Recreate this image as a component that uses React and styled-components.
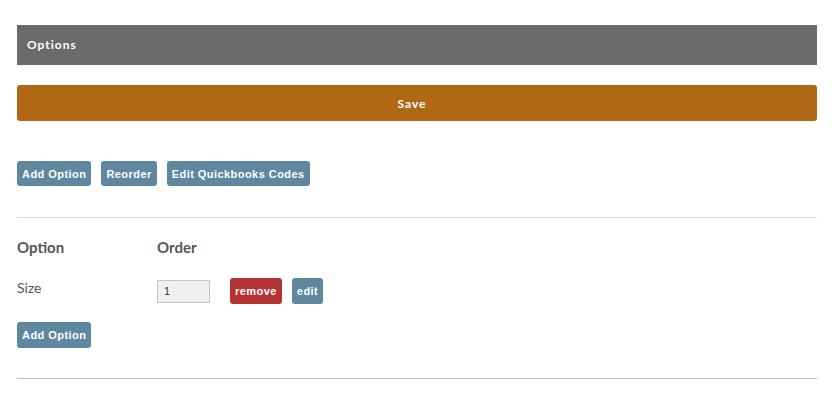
import React from 'react';
import styled, { createGlobalStyle } from 'styled-components';

const GlobalStyle = createGlobalStyle`
  body {
    margin: 0;
    background: #ffffff;
    font-family: Lato, "Open Sans", sans-serif;
  }
`;

const Root = styled.div`
  width: 800px;
  padding: 25px 17px 0;
`;

const PanelHeader = styled.div`
  height: 40px;
  background: #6b6b6b;
  color: #ffffff;
  display: flex;
  align-items: center;
  padding: 0 0 2px 10px;
  box-sizing: border-box;
  font-size: 12px;
  font-weight: 700;
  letter-spacing: 1px;
`;

const SaveButton = styled.button`
  display: block;
  width: 100%;
  height: 36px;
  margin-top: 20px;
  padding: 0 10px 0 0;
  border: 0;
  border-radius: 3px;
  background: #b06815;
  color: #ffffff;
  font-family: Lato, sans-serif;
  font-size: 12px;
  font-weight: 700;
  letter-spacing: 1px;
`;

const Toolbar = styled.div`
  display: flex;
  gap: 10px;
  margin-top: 40px;
`;

const Button = styled.button`
  height: ${p => p.$tall ? 26 : 25}px;
  padding: 0 5px;
  border: 0;
  border-radius: 3px;
  background: ${p => p.$danger ? '#b53232' : '#5f87a0'};
  color: #ffffff;
  font-family: "Liberation Sans", Arial, sans-serif;
  font-size: 11px;
  font-weight: 700;
  letter-spacing: 0.45px;
`;

const Divider = styled.hr`
  margin: ${p => p.$top}px 0 0;
  border: 0;
  border-top: 1px solid ${p => p.$dark ? '#bdbdbd' : '#dddddd'};
`;

const Grid = styled.div`
  display: grid;
  grid-template-columns: 140px auto;
  align-items: start;
`;

const HeadCell = styled.div`
  font-size: 15px;
  font-weight: 700;
  color: #555555;
  padding-top: 20px;
  line-height: 18px;
`;

const Label = styled.div`
  font-size: 14px;
  color: #555555;
  line-height: 18px;
  padding-top: 23px;
`;

const Cell = styled.div`
  display: flex;
  align-items: center;
  gap: 20px;
  padding-top: 22px;
`;

const Actions = styled.div`
  display: flex;
  gap: 10px;
`;

const OrderInput = styled.input`
  box-sizing: border-box;
  width: 53px;
  height: 23px;
  border: 1px solid #c4c4c4;
  background: #f0f0f0;
  padding: 0 6px;
  font-family: "Liberation Sans", Arial, sans-serif;
  font-size: 11px;
  color: #333333;
`;

const Footer = styled.div`
  margin-top: 18px;
`;

export default function App() {
  return (
    <>
      <GlobalStyle />
      <Root>
        <PanelHeader>Options</PanelHeader>
        <SaveButton>Save</SaveButton>
        <Toolbar>
          <Button>Add Option</Button>
          <Button>Reorder</Button>
          <Button>Edit Quickbooks Codes</Button>
        </Toolbar>
        <Divider $top={31} />
        <Grid>
          <HeadCell>Option</HeadCell>
          <HeadCell>Order</HeadCell>
          <Label>Size</Label>
          <Cell>
            <OrderInput defaultValue="1" />
            <Actions>
              <Button $danger $tall>remove</Button>
              <Button $tall>edit</Button>
            </Actions>
          </Cell>
        </Grid>
        <Footer>
          <Button $tall>Add Option</Button>
        </Footer>
        <Divider $top={30} $dark />
      </Root>
    </>
  );
}
